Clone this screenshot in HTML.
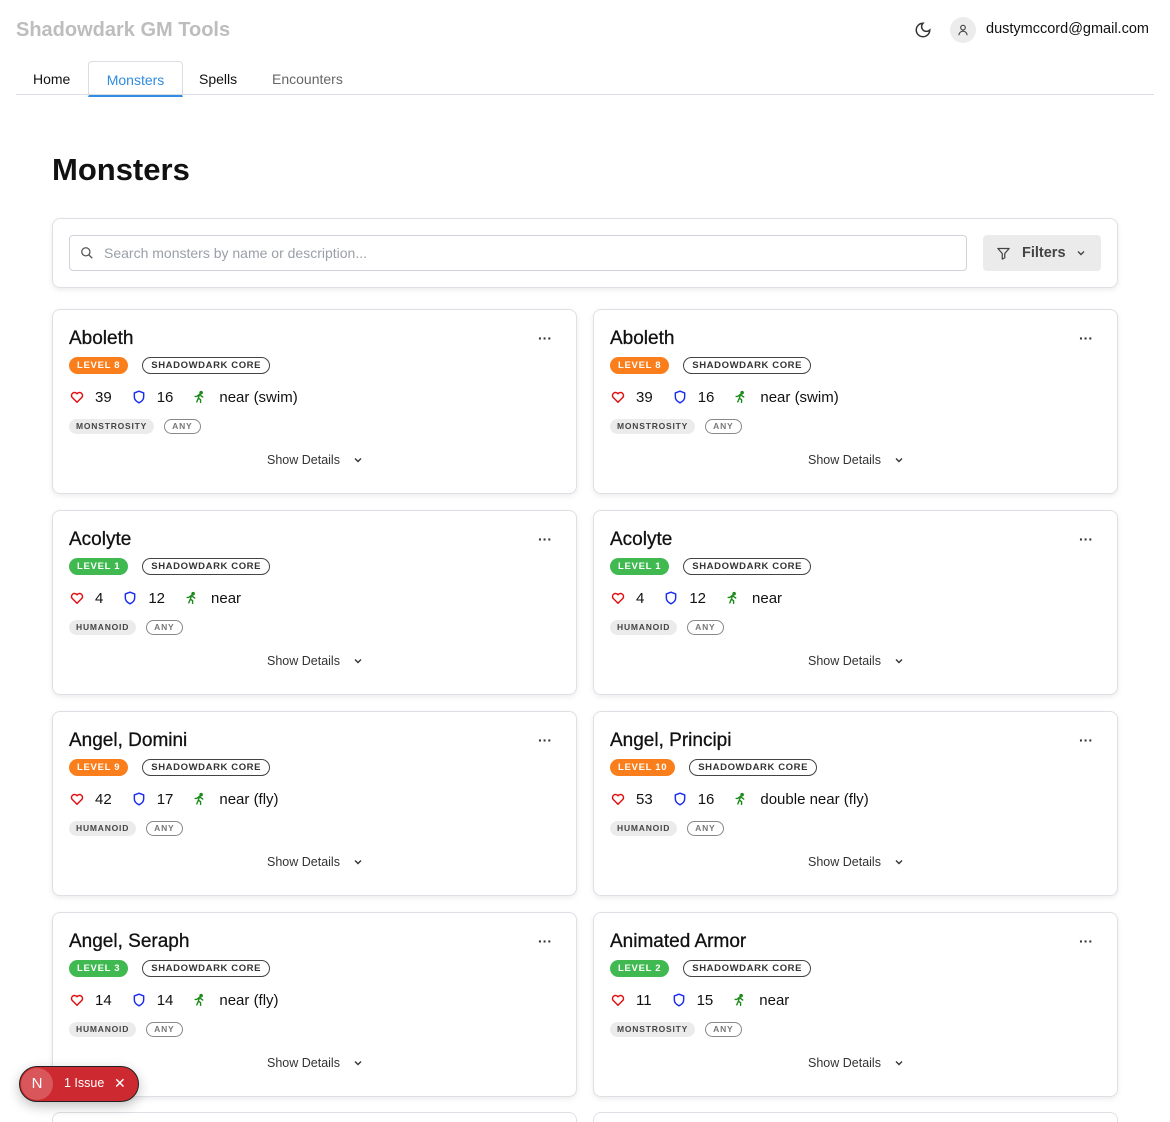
<!DOCTYPE html>
<html style="height:1122px;overflow:hidden"><head><meta charset="utf-8"><style>
*{box-sizing:border-box;margin:0;padding:0}
body{width:1170px;height:1122px;overflow:hidden;background:#fff;font-family:"Liberation Sans",Arial,sans-serif;color:#111;position:relative}
.abs{position:absolute}
.brand{left:16px;top:19px;font-size:20px;font-weight:bold;color:#bdbdbd}
.tabs{left:16px;top:61px;width:1138px;height:34px;border-bottom:1px solid #dcdde3}
.tab{position:absolute;top:0;height:36px;line-height:36px;font-size:14px}
.card{position:absolute;width:525px;height:185px;border:1px solid #dfe0e5;border-radius:8px;box-shadow:0 2px 6px rgba(0,0,0,.08);background:#fff}
.t{position:absolute;left:16px;top:18px;font-size:19px;-webkit-text-stroke:0.3px #111}
.dots{position:absolute;right:24px;top:20px;font-size:14px;color:#333;font-weight:bold}
.badges{position:absolute;left:16px;top:47px;display:flex;gap:14px}
.lv{height:17px;line-height:17px;border-radius:9px;color:#fff;font-size:9.5px;font-weight:bold;letter-spacing:0.7px;padding:0 8px}
.o{background:#fa7f1c}.g{background:#3fb950}
.src{height:17px;line-height:15px;border:1.3px solid #444;border-radius:9px;font-size:9.5px;font-weight:bold;letter-spacing:0.6px;padding:0 8px;color:#333}
.stats{position:absolute;left:17px;top:77px;display:flex;align-items:center;font-size:15px;height:20px}
.stats svg{margin-right:11px}
.stats span{margin-right:20px}
.tags{position:absolute;left:16px;top:109px;display:flex;gap:10px}
.tg{height:15px;line-height:15px;background:#ebebeb;border-radius:8px;font-size:8.5px;font-weight:bold;letter-spacing:0.8px;padding:0 7px;color:#444}
.any{height:15px;line-height:13px;border:1px solid #888;border-radius:8px;font-size:8.5px;font-weight:bold;letter-spacing:0.8px;padding:0 7px;color:#777}
.sd{position:absolute;left:214px;top:143px;font-size:12.5px;color:#333;display:flex;align-items:center}
.sd svg{margin-left:13px}
</style></head><body>
<div class="abs brand">Shadowdark GM Tools</div>
<svg class="abs" style="left:914px;top:21px" width="18" height="18" viewBox="0 0 24 24" fill="none" stroke="#333" stroke-width="2" stroke-linecap="round"><path d="M12 3a6 6 0 0 0 9 9 9 9 0 1 1-9-9z"/></svg>
<div class="abs" style="left:950px;top:17px;width:26px;height:26px;border-radius:13px;background:#ececec"></div>
<svg class="abs" style="left:956px;top:23px" width="14" height="14" viewBox="0 0 24 24" fill="none" stroke="#444" stroke-width="2"><circle cx="12" cy="8" r="4"/><path d="M5 21a7 7 0 0 1 14 0"/></svg>
<div class="abs" style="left:986px;top:21px;font-size:14.5px">dustymccord@gmail.com</div>
<div class="abs tabs">
<div class="tab" style="left:17px">Home</div>
<div class="tab" style="left:72px;width:95px;border:1px solid #dcdde3;border-bottom:2px solid #2f8ce0;border-radius:4px 4px 0 0;color:#2f8ce0;text-align:center">Monsters</div>
<div class="tab" style="left:183px">Spells</div>
<div class="tab" style="left:256px;color:#666">Encounters</div>
</div>
<div class="abs" style="left:52px;top:152px;font-size:31px;font-weight:bold">Monsters</div>
<div class="abs" style="left:52px;top:218px;width:1066px;height:70px;border:1px solid #dfe0e5;border-radius:8px;box-shadow:0 2px 6px rgba(0,0,0,.08)"></div>
<div class="abs" style="left:69px;top:235px;width:898px;height:36px;border:1px solid #cfd2d8;border-radius:4px"></div>
<svg class="abs" style="left:80px;top:246px" width="14" height="14" viewBox="0 0 24 24" fill="none" stroke="#555" stroke-width="2.2"><circle cx="10" cy="10" r="7"/><path d="M15 15l6 6"/></svg>
<div class="abs" style="left:104px;top:245px;font-size:14px;color:#9aa0a8">Search monsters by name or description...</div>
<div class="abs" style="left:983px;top:235px;width:118px;height:36px;background:#ebebeb;border-radius:4px"></div>
<svg class="abs" style="left:996px;top:246px" width="15" height="15" viewBox="0 0 24 24" fill="none" stroke="#444" stroke-width="2" stroke-linejoin="round"><path d="M3 4h18l-7 8v7l-4 2v-9z"/></svg>
<div class="abs" style="left:1022px;top:245px;font-size:14.5px;font-weight:bold;color:#444">Filters</div>
<svg class="abs" style="left:1076px;top:249px" width="10" height="8" viewBox="0 0 10 8" fill="none" stroke="#444" stroke-width="1.4"><path d="M2 2.5l3 3 3-3"/></svg>

<div id="c"></div>
<script>
const H='<svg width="14" height="14" viewBox="0 0 24 24" fill="none" stroke="#e01010" stroke-width="2.5" stroke-linejoin="round"><path d="M12 21l-8.5-8.5a5 5 0 0 1 8.5-6 5 5 0 0 1 8.5 6z"/></svg>';
const S='<svg width="14" height="14" viewBox="0 0 24 24" fill="none" stroke="#1a2cf0" stroke-width="2.5" stroke-linejoin="round"><path d="M12 2l8 3v7c0 5-4 8-8 10-4-2-8-5-8-10V5z"/></svg>';
const R='<svg width="13" height="14" viewBox="0 0 24 24" fill="none" stroke="#1a8a1a" stroke-width="2.6" stroke-linecap="round"><circle cx="15" cy="4" r="2" fill="#1a8a1a"/><path d="M8 10l4-3 3 3 3 2M12 7l-2 7 4 3v5M10 14l-3 7M7 11H4"/></svg>';
const C='<svg width="10" height="8" viewBox="0 0 10 8" fill="none" stroke="#333" stroke-width="1.4"><path d="M2 2.5l3 3 3-3"/></svg>';
const d=[["Aboleth",8,"o","39","16","near (swim)","MONSTROSITY"],["Aboleth",8,"o","39","16","near (swim)","MONSTROSITY"],
["Acolyte",1,"g","4","12","near","HUMANOID"],["Acolyte",1,"g","4","12","near","HUMANOID"],
["Angel, Domini",9,"o","42","17","near (fly)","HUMANOID"],["Angel, Principi",10,"o","53","16","double near (fly)","HUMANOID"],
["Angel, Seraph",3,"g","14","14","near (fly)","HUMANOID"],["Animated Armor",2,"g","11","15","near","MONSTROSITY"]];
let h='';
d.forEach((m,i)=>{const x=i%2?593:52,y=309+Math.floor(i/2)*201;
h+=`<div class="card" style="left:${x}px;top:${y}px"><div class="t">${m[0]}</div><div class="dots">···</div>
<div class="badges"><div class="lv ${m[2]}">LEVEL ${m[1]}</div><div class="src">SHADOWDARK CORE</div></div>
<div class="stats">${H}<span>${m[3]}</span>${S}<span>${m[4]}</span>${R}<span style="margin-left:2px">${m[5]}</span></div>
<div class="tags"><div class="tg">${m[6]}</div><div class="any">ANY</div></div>
<div class="sd">Show Details${C}</div></div>`;});
h+='<div class="card" style="left:52px;top:1112px;height:10px;border-bottom:none;border-radius:8px 8px 0 0;box-shadow:none"></div><div class="card" style="left:593px;top:1112px;height:10px;border-bottom:none;border-radius:8px 8px 0 0;box-shadow:none"></div>';
document.getElementById('c').innerHTML=h;
</script>
<div class="abs" style="left:19px;top:1066px;width:120px;height:36px;border-radius:18px;background:#cc2a30;border:1px solid #222;box-shadow:0 4px 12px rgba(0,0,0,.25)"></div>
<div class="abs" style="left:21px;top:1068px;width:32px;height:32px;border-radius:16px;background:#d9565b;color:#fff;font-size:15px;line-height:32px;text-align:center">N</div>
<div class="abs" style="left:64px;top:1076px;color:#fff;font-size:12.5px">1 Issue</div>
<div class="abs" style="left:114px;top:1075px;color:#fff;font-size:14px">✕</div>
</body></html>
